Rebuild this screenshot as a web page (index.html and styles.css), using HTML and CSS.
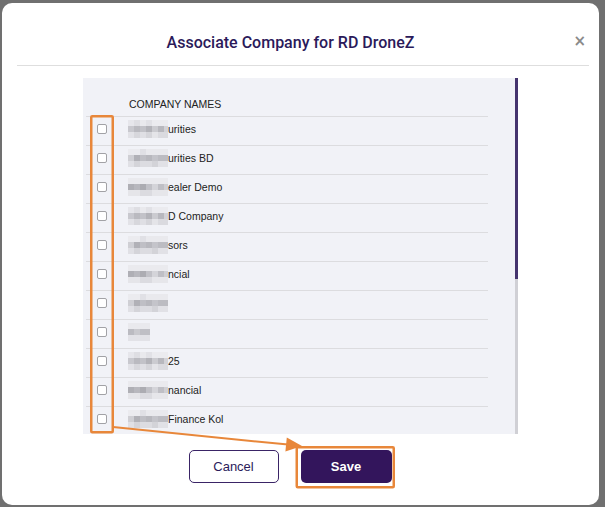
FILE: index.html
```html
<!DOCTYPE html>
<html>
<head>
<meta charset="utf-8">
<link rel="stylesheet" href="styles.css">
</head>
<body>
<div class="modal">
  <div class="modal-head">
    <h1 class="title">Associate Company for RD DroneZ</h1>
    <span class="close">×</span>
  </div>
  <div class="divider"></div>
  <div class="panel">
    <div class="list">
      <div class="list-head">COMPANY NAMES</div>
      <div class="row"><span class="cb"></span><span class="blur b1"></span><span class="name">urities</span></div>
      <div class="row"><span class="cb"></span><span class="blur b2"></span><span class="name">urities BD</span></div>
      <div class="row"><span class="cb"></span><span class="blur b3"></span><span class="name">ealer Demo</span></div>
      <div class="row"><span class="cb"></span><span class="blur b1"></span><span class="name">D Company</span></div>
      <div class="row"><span class="cb"></span><span class="blur b2"></span><span class="name">sors</span></div>
      <div class="row"><span class="cb"></span><span class="blur b3"></span><span class="name">ncial</span></div>
      <div class="row"><span class="cb"></span><span class="blur b2"></span><span class="name"></span></div>
      <div class="row"><span class="cb"></span><span class="blur b4"></span><span class="name"></span></div>
      <div class="row"><span class="cb"></span><span class="blur b1"></span><span class="name">25</span></div>
      <div class="row"><span class="cb"></span><span class="blur b3"></span><span class="name">nancial</span></div>
      <div class="row"><span class="cb"></span><span class="blur b2"></span><span class="name">Finance Kol</span></div>
      <div class="row"><span class="cb"></span><span class="blur b1"></span><span class="name">Capital</span></div>
    </div>
    <div class="scrollbar"><div class="thumb"></div></div>
  </div>
  <div class="actions">
    <button class="btn cancel">Cancel</button>
    <button class="btn save">Save</button>
  </div>
</div>
<svg class="annot" width="605" height="507" viewBox="0 0 605 507">
  <rect x="91.25" y="116.25" width="21.5" height="316" fill="none" stroke="#e8873a" stroke-width="2.5" rx="1"/>
  <rect x="296.75" y="447.25" width="97" height="40" fill="none" stroke="#e8873a" stroke-width="2.5" rx="1"/>
  <line x1="113" y1="427" x2="288" y2="444.6" stroke="#e8873a" stroke-width="2"/>
  <polygon points="302,446 286.8,437.4 285.4,451.4" fill="#e8873a"/>
</svg>
</body>
</html>
```
FILE: styles.css
```css
html, body {
  margin: 0;
  padding: 0;
}
body {
  width: 605px;
  height: 507px;
  background: #707070;
  overflow: hidden;
  position: relative;
  font-family: "Liberation Sans", Arial, sans-serif;
}
.modal {
  margin: 3px 0 0 2px;
  width: 597px;
  height: 502px;
  background: #fff;
  border-radius: 10px;
  box-sizing: border-box;
  padding-top: 1px;
}
.modal-head {
  position: relative;
  height: 61px;
  display: flex;
  align-items: center;
  justify-content: center;
}
.title {
  margin: 0;
  font-family: Roboto, "Liberation Sans", sans-serif;
  font-size: 16px;
  font-weight: 500;
  color: #2b1a5a;
  padding-top: 15px;
  padding-right: 20px;
}
.close {
  position: absolute;
  right: 13px;
  top: 28px;
  font-family: "DejaVu Sans", sans-serif;
  font-size: 15px;
  font-weight: bold;
  color: #8a8a8a;
}
.divider {
  margin: 0 10px 0 15px;
  height: 1px;
  background: #dedede;
}
.panel {
  margin: 12px auto 0;
  width: 435px;
  height: 356px;
  background: #f1f2f7;
  display: flex;
  overflow: hidden;
}
.list {
  flex: 1;
  padding-left: 3px;
}
.list-head {
  height: 38px;
  box-sizing: border-box;
  padding: 20px 0 0 43px;
  font-size: 10.5px;
  color: #222;
  width: 402px;
}
.row {
  width: 402px;
  height: 29px;
  box-sizing: border-box;
  border-top: 1px solid #dcdcdf;
  padding-bottom: 4px;
  display: flex;
  align-items: center;
  font-size: 10.5px;
  color: #222;
}
.cb {
  width: 8px;
  height: 8px;
  border: 1px solid #a2a2a6;
  border-radius: 2px;
  background: #fff;
  margin: 0 0 0 11px;
  flex: none;
}
.blur {
  margin-left: 21px;
  width: 40px;
  height: 18px;
  flex: none;
  background-repeat: no-repeat;
}
.b1 {
  background:
    linear-gradient(90deg, #e6e6eb 0 6px, #dedee3 6px 12px, #e9e9ed 12px 18px, #e1e1e6 18px 24px, #ebebef 24px 40px) 0 0 / 40px 6px no-repeat,
    linear-gradient(90deg, #c8c8ce 0 6px, #babac0 6px 12px, #c2c2c8 12px 18px, #b3b3b9 18px 24px, #cbcbd0 24px 30px, #b8b8be 30px 36px, #d2d2d7 36px 40px) 0 6px / 40px 6px no-repeat,
    linear-gradient(90deg, #e2e2e7 0 6px, #d7d7dc 6px 12px, #dfdfe4 12px 18px, #d5d5da 18px 24px, #e4e4e8 24px 30px, #dadadf 30px 40px) 0 12px / 40px 6px no-repeat;
}
.b2 {
  background:
    linear-gradient(90deg, #ebebef 0 12px, #e0e0e5 12px 18px, #e9e9ed 18px 40px) 0 0 / 40px 6px no-repeat,
    linear-gradient(90deg, #cfcfd4 0 6px, #b1b1b7 6px 12px, #bfbfc5 12px 18px, #b8b8be 18px 24px, #c4c4ca 24px 30px, #bcbcc2 30px 40px) 0 6px / 40px 6px no-repeat,
    linear-gradient(90deg, #e0e0e5 0 6px, #d4d4d9 6px 12px, #dcdce1 12px 24px, #d3d3d8 24px 30px, #e1e1e6 30px 40px) 0 12px / 40px 6px no-repeat;
}
.b3 {
  background:
    linear-gradient(90deg, #eaeaee 0 40px) 0 0 / 40px 6px no-repeat,
    linear-gradient(90deg, #afafb5 0 6px, #b8b8be 6px 12px, #acacb2 12px 18px, #c1c1c7 18px 24px, #d4d4d9 24px 30px, #bfbfc5 30px 36px, #cfcfd4 36px 40px) 0 6px / 40px 6px no-repeat,
    linear-gradient(90deg, #e5e5e9 0 12px, #dbdbe0 12px 24px, #e6e6ea 24px 40px) 0 12px / 40px 6px no-repeat;
}
.b4 {
  width: 22px;
  background:
    linear-gradient(90deg, #e9e9ed 0 22px) 0 0 / 22px 6px no-repeat,
    linear-gradient(90deg, #bbbbc1 0 6px, #c9c9ce 6px 12px, #bfbfc5 12px 22px) 0 6px / 22px 6px no-repeat,
    linear-gradient(90deg, #e2e2e7 0 22px) 0 12px / 22px 6px no-repeat;
}
.b4 + .name { margin-left: 18px; }
.name {
  white-space: nowrap;
}
.scrollbar {
  width: 3px;
  flex: none;
  background: #d0d0d5;
  height: 100%;
}
.thumb {
  height: 201px;
  background: #45346e;
}
.actions {
  display: flex;
  justify-content: center;
  gap: 22px;
  margin-top: 16px;
  padding-right: 21px;
}
.btn {
  width: 90px;
  height: 33px;
  padding: 0;
  flex: none;
  display: flex;
  align-items: center;
  justify-content: center;
  border-radius: 5px;
  font-family: "Liberation Sans", Arial, sans-serif;
  font-size: 13px;
  line-height: 16px;
  cursor: pointer;
}
.cancel {
  background: #fff;
  border: 1px solid #3a2466;
  color: #2b1a5a;
}
.save {
  width: 91px;
  background: #33155c;
  border: none;
  color: #fff;
  font-weight: bold;
}
.annot {
  position: absolute;
  left: 0;
  top: 0;
  pointer-events: none;
}
```
